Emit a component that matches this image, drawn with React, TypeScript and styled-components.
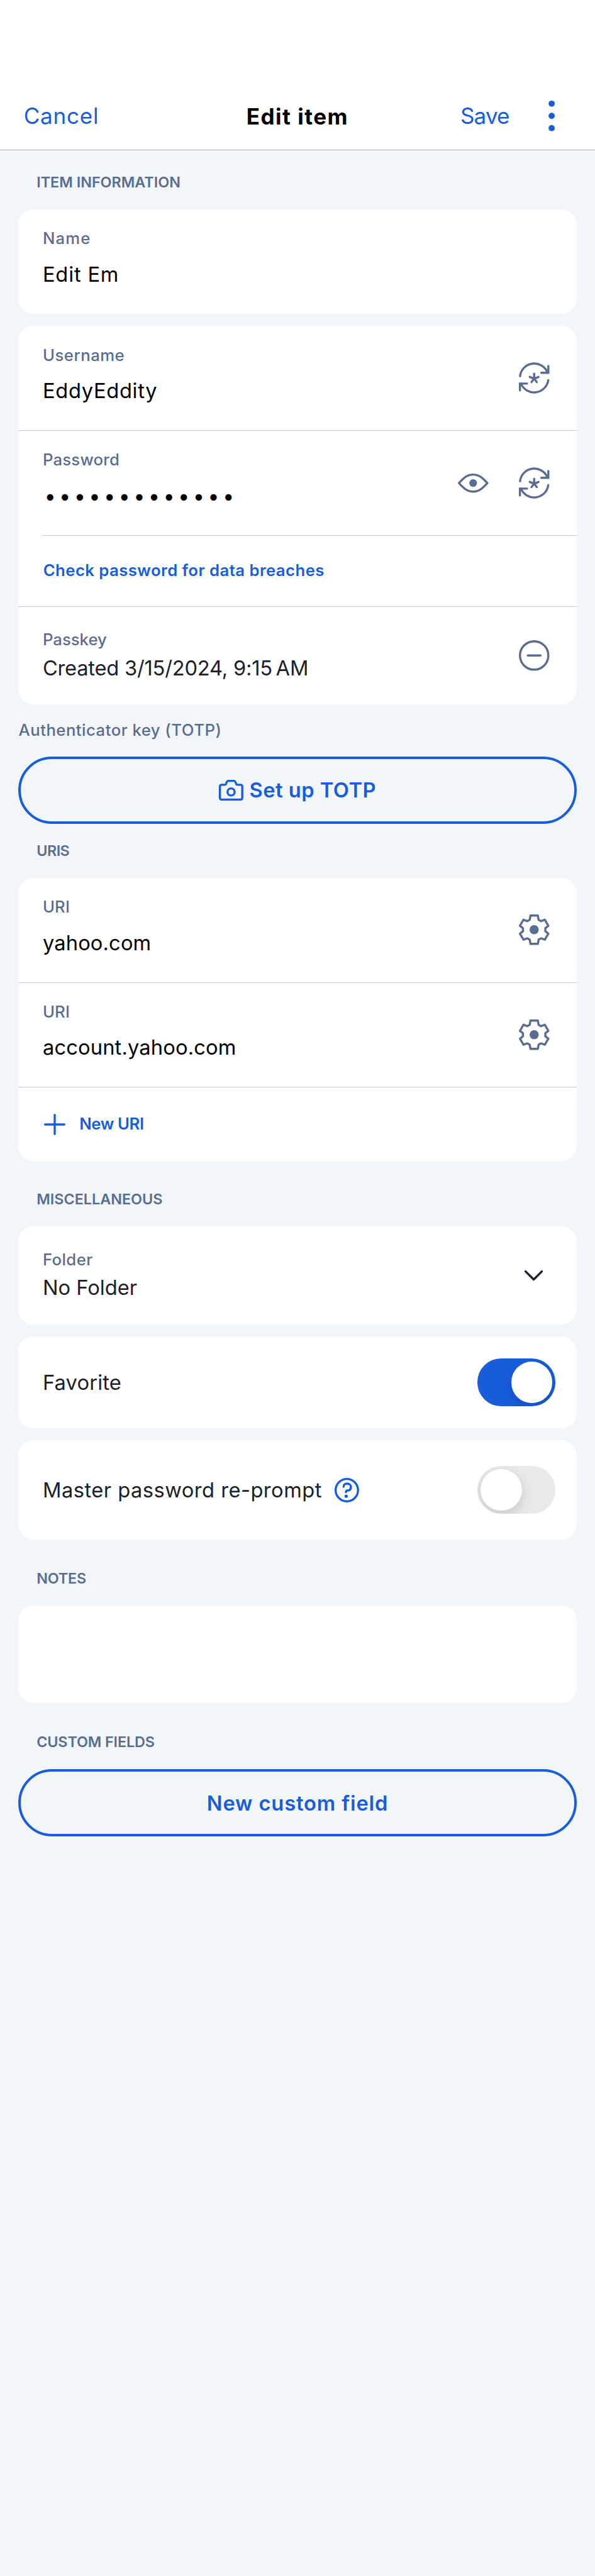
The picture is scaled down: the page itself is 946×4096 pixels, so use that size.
import React from "react";
import styled, { createGlobalStyle } from "styled-components";

const d = (n: number) => `${+(n * 0.80885).toFixed(3)}px`;

const color = {
  page: "#f3f6f9",
  card: "#ffffff",
  primary: "#175ddc",
  text: "#1b2029",
  muted: "#5a6d91",
  line: "#c9c9cb",
  off: "#e9e9e9",
};

const GlobalStyle = createGlobalStyle`
  * { box-sizing: border-box; }
  html, body { margin: 0; padding: 0; background: ${color.page}; }
  body { font-family: Inter, "Liberation Sans", sans-serif; color: ${color.text}; }
  svg { display: block; flex: none; overflow: visible; }
  button { font-family: inherit; background: none; border: 0; padding: 0; margin: 0; }
`;

const Screen = styled.div`
  width: 100%;
  min-height: 4096px;
  background: ${color.page};
`;

const NavBar = styled.header`
  display: grid;
  grid-template-columns: 1fr auto 1fr;
  align-items: center;
  height: ${d(295)};
  padding: ${d(162)} ${d(79)} 0 ${d(46.7)};
  background: ${color.card};
  border-bottom: 1px solid #b0b0b3;
`;

const NavButton = styled.button<{ $tracking: number }>`
  justify-self: start;
  color: ${color.primary};
  font-size: ${d(43.3)};
  line-height: ${d(60)};
  letter-spacing: ${(p) => p.$tracking}px;
`;

const NavTitle = styled.h1`
  margin: 0;
  padding: ${d(3)} 0 0 ${d(32)};
  color: #000;
  font-size: ${d(43.3)};
  font-weight: 700;
  line-height: ${d(60)};
  letter-spacing: 1.5px;
`;

const NavActions = styled.div`
  display: flex;
  align-items: center;
  justify-content: flex-end;
  gap: ${d(77)};
`;

const Form = styled.main`
  padding: 0 ${d(36)};
`;

const SectionTitle = styled.h2<{ $above: number; $tracking?: number }>`
  margin: 0;
  padding: ${(p) => d(p.$above)} 0 ${d(32.3)} ${d(36)};
  color: ${color.muted};
  font-size: ${d(28.9)};
  font-weight: 600;
  line-height: ${d(42)};
  letter-spacing: ${(p) => p.$tracking ?? 0}px;
`;

const Card = styled.section<{ $height?: number }>`
  height: ${(p) => (p.$height ? d(p.$height) : "auto")};
  background: ${color.card};
  border-radius: ${d(30)};
  overflow: hidden;

  & + & {
    margin-top: ${d(24)};
  }
`;

const Row = styled.div<{ $height: number; $right?: number }>`
  display: flex;
  align-items: center;
  justify-content: space-between;
  height: ${(p) => d(p.$height)};
  padding: 0 ${(p) => d(p.$right ?? 54)} 0 ${d(48)};
`;

const Divider = styled.hr<{ $inset?: boolean }>`
  height: 1px;
  margin: 0 0 0 ${(p) => (p.$inset ? d(48) : "0")};
  border: 0;
  background: ${color.line};
`;

const FieldText = styled.div<{ $gap: number; $shift?: number }>`
  display: flex;
  flex-direction: column;
  gap: ${(p) => d(p.$gap)};
  padding-bottom: ${(p) => d(p.$shift ?? 0)};
`;

const Label = styled.span<{ $tracking: number }>`
  color: ${color.muted};
  font-size: ${d(31.8)};
  font-weight: 550;
  line-height: ${d(48)};
  letter-spacing: ${(p) => p.$tracking}px;
`;

const Value = styled.span<{ $tracking?: number; $editable?: boolean }>`
  color: ${(p) => (p.$editable ? "#000" : color.text)};
  font-size: ${d(40.4)};
  line-height: ${d(60)};
  letter-spacing: ${(p) => p.$tracking ?? 0}px;
  white-space: nowrap;
`;

const MaskedValue = styled(Value)`
  padding-left: ${d(3.2)};
  letter-spacing: 5.25px;
`;

const RowActions = styled.div`
  display: flex;
  align-items: center;
  gap: ${d(60)};
`;

const TextLink = styled.button<{ $tracking: number }>`
  display: flex;
  align-items: center;
  gap: ${d(27)};
  padding-left: ${d(1)};
  color: ${color.primary};
  font-size: ${d(31.8)};
  font-weight: 600;
  line-height: ${d(48)};
  letter-spacing: ${(p) => p.$tracking}px;

  svg {
    margin-left: ${d(2)};
  }
`;

const TotpLabel = styled.div`
  padding: ${d(27.7)} 0 ${d(27.3)} ${d(0.5)};
  height: ${d(103)};
`;

const OutlineButton = styled.button<{ $tracking: number }>`
  display: flex;
  align-items: center;
  justify-content: center;
  gap: ${d(12)};
  width: 100%;
  height: ${d(132)};
  border: ${d(4.95)} solid ${color.primary};
  border-radius: ${d(66)};
  color: ${color.primary};
  font-size: ${d(40.4)};
  font-weight: 600;
  line-height: ${d(60)};
  letter-spacing: ${(p) => p.$tracking}px;
`;

const WithHelp = styled.div`
  display: flex;
  align-items: center;
  gap: ${d(25)};
`;

const Track = styled.div<{ $on?: boolean }>`
  display: flex;
  justify-content: ${(p) => (p.$on ? "flex-end" : "flex-start")};
  width: ${d(153)};
  height: ${d(93)};
  padding: ${d(6)};
  border-radius: ${d(46.5)};
  background: ${(p) => (p.$on ? color.primary : color.off)};
  overflow: hidden;
`;

const Knob = styled.div`
  width: ${d(81)};
  height: ${d(81)};
  border-radius: 50%;
  background: #fff;
  box-shadow: 0 ${d(9)} ${d(24)} rgba(0, 0, 0, 0.14);
`;

type IconProps = { w: number; h: number; tint?: string; children: React.ReactNode };
const Icon = ({ w, h, tint = color.muted, children }: IconProps) => (
  <svg
    width={w * 0.80885}
    height={h * 0.80885}
    viewBox={`0 0 ${w} ${h}`}
    fill="none"
    stroke={tint}
    strokeWidth={4.2}
    strokeLinecap="round"
    strokeLinejoin="round"
  >
    {children}
  </svg>
);

const MoreIcon = () => (
  <Icon w={12.6} h={60} tint={color.primary}>
    <g fill={color.primary} stroke="none">
      <circle cx="6.3" cy="6" r="6.1" />
      <circle cx="6.3" cy="30" r="6.1" />
      <circle cx="6.3" cy="54" r="6.1" />
    </g>
  </Icon>
);

const GenerateIcon = () => (
  <Icon w={60} h={60}>
    <path d="M2.3 26.2A28 28 0 0 1 56 18.6" />
    <path d="M57.7 34A28 28 0 0 1 4.2 41" />
    <path d="M57.9 6V19.5H44" strokeLinejoin="miter" />
    <path d="M2.1 54.2V40.7H16" strokeLinejoin="miter" />
    <path d="M30 31V21.3M30 31L21.4 27.6M30 31L38.6 27.6M30 31L24.8 37.8M30 31L35.2 37.8" />
  </Icon>
);

const EyeIcon = () => (
  <Icon w={60} h={37.5}>
    <path d="M2 18.8C11 9 18 2 30 2S49 9 58 18.8C49 28.5 42 35.5 30 35.5S11 28.5 2 18.8Z" />
    <circle cx="30" cy="18.6" r="7.6" fill={color.muted} stroke="none" />
  </Icon>
);

const RemoveIcon = () => (
  <Icon w={60} h={60}>
    <circle cx="30" cy="30" r="27.9" />
    <path d="M17.5 30H42.5" />
  </Icon>
);

const GearIcon = () => (
  <Icon w={60} h={60}>
    <path d="M22.8 2.1H37.2L38.8 10.6L43.6 13.2L51 10.4L57.9 22.4L52 27V33L57.9 37.8L51 49.7L43.6 47L38.8 49.6L37.2 57.9H22.8L21.2 49.6L16.4 47L9 49.7L2.1 37.8L8 33V27L2.1 22.4L9 10.4L16.4 13.2L21.2 10.6Z" />
    <circle cx="30" cy="30" r="9" fill={color.muted} stroke="none" />
  </Icon>
);

const CameraIcon = () => (
  <Icon w={48} h={41} tint={color.primary}>
    <path d="M5 9.8H11.5C13.6 9.8 14 8.7 14.7 6.3C15.4 3.9 16.2 2 18.6 2H29.4C31.8 2 32.6 3.9 33.3 6.3C34 8.7 34.4 9.8 36.5 9.8H43A3 3 0 0 1 46 12.8V35.8A3 3 0 0 1 43 38.8H5A3 3 0 0 1 2 35.8V12.8A3 3 0 0 1 5 9.8Z" />
    <circle cx="24" cy="23.8" r="7" />
  </Icon>
);

const PlusIcon = () => (
  <Icon w={42} h={42} tint={color.primary}>
    <path d="M21 2V40M2 21H40" />
  </Icon>
);

const ChevronIcon = () => (
  <Icon w={36} h={20} tint={color.text}>
    <path d="M2 2L18 18L34 2" />
  </Icon>
);

const HelpIcon = () => (
  <Icon w={48} h={48} tint={color.primary}>
    <circle cx="24" cy="24" r="22" />
    <path d="M17.6 17.3C17.6 13.5 20.5 11.1 24.6 11.1C28.8 11.1 32 13.9 32 17.8C32 22.3 29 24.6 25.2 24.8C23 24.9 22.3 25.6 22.2 28" />
    <circle cx="22.7" cy="36" r="3.3" fill={color.primary} stroke="none" />
  </Icon>
);

export default function App() {
  return (
    <Screen>
      <GlobalStyle />
      <NavBar>
        <NavButton $tracking={0.76}>Cancel</NavButton>
        <NavTitle>Edit item</NavTitle>
        <NavActions>
          <NavButton $tracking={-0.83}>Save</NavButton>
          <MoreIcon />
        </NavActions>
      </NavBar>

      <Form>
        <SectionTitle $above={42.7}>ITEM INFORMATION</SectionTitle>
        <Card>
          <Row $height={205}>
            <FieldText $gap={15.8} $shift={14}>
              <Label $tracking={1.15}>Name</Label>
              <Value $editable $tracking={0.82}>Edit Em</Value>
            </FieldText>
          </Row>
        </Card>

        <Card>
          <Row $height={205}>
            <FieldText $gap={15.8} $shift={14}>
              <Label $tracking={0.5}>Username</Label>
              <Value $editable $tracking={0.68}>EddyEddity</Value>
            </FieldText>
            <GenerateIcon />
          </Row>
          <Divider />
          <Row $height={205}>
            <FieldText $gap={15.8} $shift={14}>
              <Label $tracking={0.2}>Password</Label>
              <MaskedValue $editable>•••••••••••••</MaskedValue>
            </FieldText>
            <RowActions>
              <EyeIcon />
              <GenerateIcon />
            </RowActions>
          </Row>
          <Divider $inset />
          <Row $height={138}>
            <TextLink $tracking={0.43}>Check password for data breaches</TextLink>
          </Row>
          <Divider />
          <Row $height={192}>
            <FieldText $gap={0.5}>
              <Label $tracking={0}>Passkey</Label>
              <Value $tracking={-0.22}>{"Created 3/15/2024, 9:15\u202fAM"}</Value>
            </FieldText>
            <RemoveIcon />
          </Row>
        </Card>

        <TotpLabel>
          <Label $tracking={0.47}>Authenticator key (TOTP)</Label>
        </TotpLabel>
        <OutlineButton $tracking={0.49}>
          <CameraIcon />
          Set up TOTP
        </OutlineButton>

        <SectionTitle $above={31.7} $tracking={-0.5}>URIS</SectionTitle>
        <Card>
          <Row $height={205}>
            <FieldText $gap={15.8} $shift={14}>
              <Label $tracking={0.15}>URI</Label>
              <Value $editable $tracking={0.13}>yahoo.com</Value>
            </FieldText>
            <GearIcon />
          </Row>
          <Divider />
          <Row $height={205}>
            <FieldText $gap={15.8} $shift={14}>
              <Label $tracking={0.15}>URI</Label>
              <Value $editable $tracking={0.14}>account.yahoo.com</Value>
            </FieldText>
            <GearIcon />
          </Row>
          <Divider />
          <Row $height={144}>
            <TextLink $tracking={-0.38}>
              <PlusIcon />
              New URI
            </TextLink>
          </Row>
        </Card>

        <SectionTitle $above={55}>MISCELLANEOUS</SectionTitle>
        <Card>
          <Row $height={192} $right={66}>
            <FieldText $gap={0.5}>
              <Label $tracking={0.4}>Folder</Label>
              <Value>No Folder</Value>
            </FieldText>
            <ChevronIcon />
          </Row>
        </Card>
        <Card>
          <Row $height={180} $right={42}>
            <Value $tracking={0.17}>Favorite</Value>
            <Track $on>
              <Knob />
            </Track>
          </Row>
        </Card>
        <Card>
          <Row $height={195} $right={42}>
            <WithHelp>
              <Value $tracking={0.47}>Master password re-prompt</Value>
              <HelpIcon />
            </WithHelp>
            <Track>
              <Knob />
            </Track>
          </Row>
        </Card>

        <SectionTitle $above={55.7} $tracking={-0.16}>NOTES</SectionTitle>
        <Card $height={192} />

        <SectionTitle $above={55.7} $tracking={-0.13}>CUSTOM FIELDS</SectionTitle>
        <OutlineButton $tracking={0.87}>New custom field</OutlineButton>
      </Form>
    </Screen>
  );
}
